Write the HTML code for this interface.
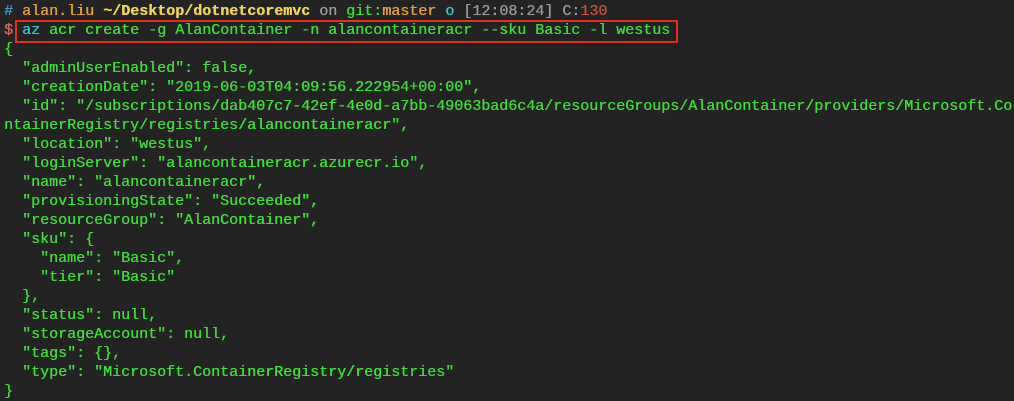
<!DOCTYPE html>
<html><head><meta charset="utf-8"><style>
html,body{margin:0;padding:0;background:#232323;width:1014px;height:401px;overflow:hidden}
pre{margin:0;padding:0 0 0 4px;font-family:"Liberation Mono",monospace;font-size:15px;line-height:19px;color:#3fdc3a;white-space:pre;position:relative;top:2px;text-shadow:0.4px 0 0 currentColor}
.b{color:#3e9bd0}.o{color:#e39e3a}.y{color:#f2d35a;font-weight:bold}.g{color:#9a9a9a}.gr{color:#3fdc3a}.c{color:#37c6d6}.r{color:#c9503e}.d{color:#d96a5c}
.box{position:absolute;left:15px;top:20px;width:659px;height:19px;border:2px solid #e2301c}
</style></head><body>
<pre><span class="b">#</span> <span class="o">alan.liu</span> <span class="y">~/Desktop/dotnetcoremvc</span> <span class="g">on</span> <span class="gr">git:</span><span class="o">master</span> <span class="c">o</span> <span class="g">[12:08:24] C:</span><span class="r">130</span>
<span class="d">$</span> <span class="c">az</span> acr create -g AlanContainer -n alancontaineracr --sku Basic -l westus
{
  "adminUserEnabled": false,
  "creationDate": "2019-06-03T04:09:56.222954+00:00",
  "id": "/subscriptions/dab407c7-42ef-4e0d-a7bb-49063bad6c4a/resourceGroups/AlanContainer/providers/Microsoft.Co
ntainerRegistry/registries/alancontaineracr",
  "location": "westus",
  "loginServer": "alancontaineracr.azurecr.io",
  "name": "alancontaineracr",
  "provisioningState": "Succeeded",
  "resourceGroup": "AlanContainer",
  "sku": {
    "name": "Basic",
    "tier": "Basic"
  },
  "status": null,
  "storageAccount": null,
  "tags": {},
  "type": "Microsoft.ContainerRegistry/registries"
}</pre>
<div class="box"></div>
</body></html>
